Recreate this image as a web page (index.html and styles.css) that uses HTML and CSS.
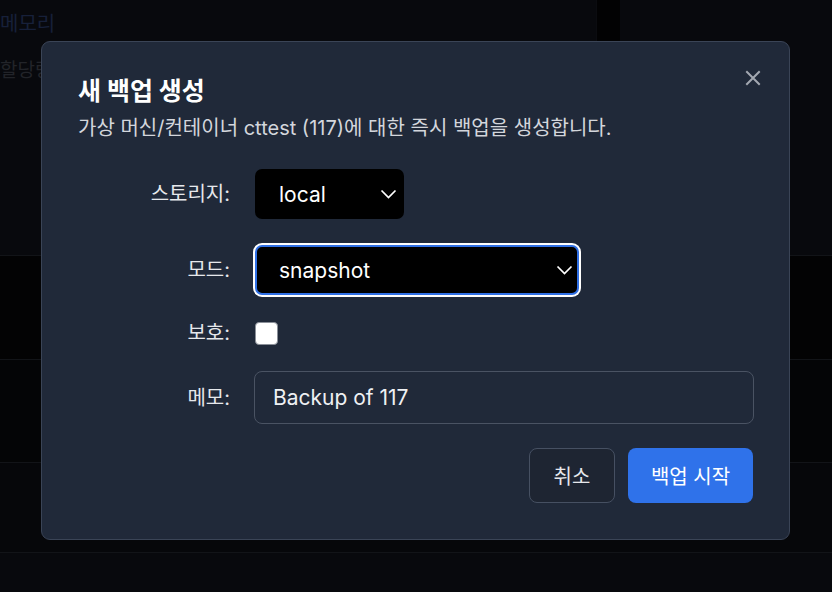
FILE: index.html
```html
<!DOCTYPE html>
<html lang="ko">
<head>
<meta charset="utf-8">
<title>새 백업 생성</title>
<link rel="stylesheet" href="styles.css">
</head>
<body>
<div class="page">
  <div class="top">
    <section class="card card-main">
      <div class="stat-title">메모리</div>
      <div class="stat-sub">할당량</div>
    </section>
    <div class="gutter"></div>
    <section class="card card-side"></section>
  </div>
  <div class="row row-a"></div>
  <div class="row row-b"></div>
  <div class="row row-c"></div>
  <div class="row row-d"></div>
</div>

<div class="overlay">
  <div class="modal" role="dialog">
    <button class="close" aria-label="닫기">
      <svg width="16" height="16" viewBox="0 0 16 16"><path d="M2 2L14 14M14 2L2 14" stroke="#a3a8b1" stroke-width="2" stroke-linecap="square"/></svg>
    </button>
    <h2 class="title">새 백업 생성</h2>
    <p class="desc">가상 머신/컨테이너 cttest (117)에 대한 즉시 백업을 생성합니다.</p>
    <div class="form">
      <label class="lbl">스토리지:</label>
      <div class="ctl"><div class="select select-sm"><span>local</span><svg class="chev" width="17" height="10" viewBox="0 0 17 10"><path d="M1.5 1.5L8.5 8.5L15.5 1.5" fill="none" stroke="#fff" stroke-width="1.7"/></svg></div></div>
      <label class="lbl">모드:</label>
      <div class="ctl"><div class="select select-lg focus"><span>snapshot</span><svg class="chev" width="17" height="10" viewBox="0 0 17 10"><path d="M1.5 1.5L8.5 8.5L15.5 1.5" fill="none" stroke="#fff" stroke-width="1.7"/></svg></div></div>
      <label class="lbl">보호:</label>
      <div class="ctl"><span class="check"></span></div>
      <label class="lbl">메모:</label>
      <div class="ctl"><div class="input">Backup of 117</div></div>
    </div>
    <div class="actions">
      <button class="btn btn-cancel">취소</button>
      <button class="btn btn-primary">백업 시작</button>
    </div>
  </div>
</div>
</body>
</html>
```
FILE: styles.css
```css
* { box-sizing: border-box; }
html, body { margin: 0; padding: 0; }
body {
  width: 832px;
  height: 592px;
  overflow: hidden;
  background: #08090d;
  font-family: Inter, "Noto Sans CJK KR", sans-serif;
  color: #fff;
  position: relative;
}
.page { display: flex; flex-direction: column; }
.top { display: flex; height: 255px; }
.card-main { width: 596px; background: #08090d; padding: 8px 0 0 0; }
.gutter { width: 24px; background: #020203; border-left: 1px solid #0b0c10; }
.card-side { flex: 1; background: #08090d; }
.stat-title { font-size: 20px; color: #172039; line-height: 32px; }
.stat-sub { font-size: 19px; color: #222429; margin-top: 18px; line-height: 26px; }
.row { border-top: 1px solid #121418; }
.row-a { height: 104px; background: #030304; }
.row-b { height: 103px; background: #040506; }
.row-c { height: 90px; background: #06070a; }
.row-d { flex: 1; height: 40px; background: #08090d; }

.overlay {
  position: absolute;
  inset: 0;
  padding: 41px 0 0 41px;
}
.modal {
  position: relative;
  width: 749px;
  height: 499px;
  background: #202939;
  border: 1px solid #3a4456;
  border-radius: 9px;
  padding: 31px 36px 36px 36px;
}
.close {
  position: absolute;
  top: 28px;
  right: 28px;
  width: 16px;
  height: 16px;
  padding: 0;
  border: 0;
  background: none;
  display: flex;
}
.title {
  margin: 0;
  font-size: 25px;
  font-weight: 700;
  line-height: 36px;
  color: #fff;
}
.desc {
  margin: 5px 0 0 0;
  font-size: 20px;
  line-height: 28px;
  color: #d3d6dc;
}
.form {
  display: grid;
  grid-template-columns: 152px 1fr;
  column-gap: 24px;
  row-gap: 26px;
  margin-top: 27px;
  align-items: center;
}
.lbl {
  text-align: right;
  font-size: 20px;
  line-height: 24px;
  color: #e6e8ec;
}
.ctl { display: flex; align-items: center; }
.select {
  height: 50px;
  background: #000;
  border-radius: 7px;
  display: flex;
  align-items: center;
  justify-content: space-between;
  padding: 0 7px 0 24px;
  font-size: 21px;
  color: #fff;
}
.select-sm { width: 149px; margin-left: 1px; }
.select-lg { width: 324px; margin: 0 0 0 1px; }
.focus {
  border: 2px solid #2f6fe4;
  box-shadow: 0 0 0 2px #fff;
  padding-left: 22px;
  padding-right: 4px;
}
.check {
  width: 23px;
  height: 23px;
  background: #fff;
  border: 1px solid #8a8f98;
  border-radius: 4px;
  margin-left: 1px;
}
.input {
  width: 500px;
  height: 53px;
  border: 1px solid #4a5363;
  border-radius: 8px;
  display: flex;
  align-items: center;
  padding-left: 18px;
  font-size: 21px;
  color: #eef0f3;
}
.actions {
  display: flex;
  justify-content: flex-end;
  gap: 13px;
  margin-top: 24px;
}
.btn {
  height: 55px;
  border-radius: 8px;
  font-family: Inter, "Noto Sans CJK KR", sans-serif;
  font-size: 20px;
  color: #fff;
  padding: 0;
}
.btn-cancel {
  width: 86px;
  background: #1e2532;
  border: 1px solid #465062;
  color: #e6e8ec;
}
.btn-primary {
  width: 125px;
  background: #2f72ea;
  border: 0;
}
```
